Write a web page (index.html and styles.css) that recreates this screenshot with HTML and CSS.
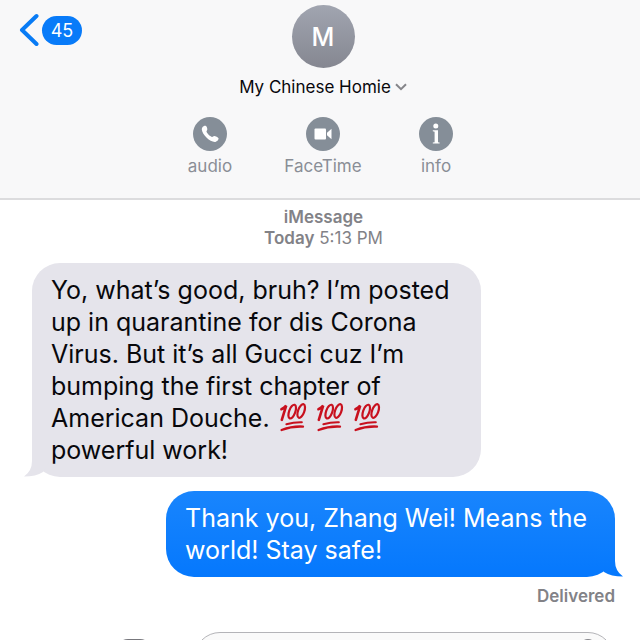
FILE: index.html
```html
<!DOCTYPE html>
<html lang="en">
<head>
<meta charset="utf-8">
<meta name="viewport" content="width=device-width, initial-scale=1">
<title>Messages</title>
<link rel="stylesheet" href="styles.css">
</head>
<body>
<svg class="sprite" aria-hidden="true">
  <linearGradient id="tail-fill" x1="0" y1="0" x2="0" y2="1">
    <stop offset="0" stop-color="#0c7dfd"/>
    <stop offset="1" stop-color="#0578fd"/>
  </linearGradient>
  <symbol id="hundred" viewBox="0 0 28 30">
    <g fill="none" stroke="#c8101e" stroke-linecap="round">
      <path stroke-width="2.600" d="M2.400 7.200Q5.500 6 7.200 3.600L2.800 17.800"/>
      <ellipse stroke-width="2.200" cx="13.200" cy="9.600" rx="3.100" ry="7.200" transform="rotate(20 13.200 9.600)"/>
      <ellipse stroke-width="2.200" cx="22.200" cy="9" rx="3.100" ry="7.200" transform="rotate(20 22.200 9)"/>
      <path stroke-width="2.100" d="M7.400 22.200Q15 20 22.800 20.200"/>
      <path stroke-width="2.300" d="M2.600 28Q13 24 24 24.600"/>
    </g>
  </symbol>
</svg>
<header class="header">
  <a class="back" href="#" aria-label="Back, 45 unread">
    <svg class="back-icon" viewBox="0 0 20 34" aria-hidden="true"><path d="M17.500 3 3 17l14.500 14"/></svg>
    <span class="badge">45</span>
  </a>
  <div class="contact">
    <div class="avatar">M</div>
    <button class="name" type="button">My Chinese Homie<svg class="chevron" viewBox="0 0 12 8" aria-hidden="true"><path d="m1 1.200 5 5 5-5"/></svg></button>
  </div>
  <nav class="actions">
    <button class="action" type="button">
      <svg class="action-icon" viewBox="0 0 34 34" aria-hidden="true"><circle cx="17" cy="17" r="17"/><path fill="#fff" d="M9.600 10.100c.8-1 2-1.700 3-1.300 1 .4 1.900 2.500 1.700 3.600-.2 1-.9 1.300-.8 2.100.3 1.700 3.600 4.900 5.400 5.400.9.2 1.300-.7 2.200-.8 1.200-.1 3.900 1.200 4.400 2.200.5 1.200-1.500 3.400-3.200 3.600-2.600.3-6-1.600-8.600-4.100-2.600-2.600-4.700-5.700-4.900-8.300-.1-.9.200-1.700.8-2.400z"/></svg>
      audio
    </button>
    <button class="action" type="button">
      <svg class="action-icon" viewBox="0 0 34 34" aria-hidden="true"><circle cx="17" cy="17" r="17"/><rect x="8.500" y="11.500" width="11.500" height="11" rx="1" fill="#fff"/><path fill="#fff" d="M21 15.800 25.500 11.700v10.600L21 18.300z"/></svg>
      FaceTime
    </button>
    <button class="action" type="button">
      <svg class="action-icon" viewBox="0 0 34 34" aria-hidden="true"><circle cx="17" cy="17" r="17"/><circle cx="16.800" cy="9" r="2.500" fill="#fff"/><path fill="#fff" d="M13.800 13.300h5.200v11.900l1.600.4v1h-6.800v-1l1.800-.4V14.700l-1.800-.4z"/></svg>
      info
    </button>
  </nav>
</header>
<main class="thread">
  <p class="stamp"><b>iMessage</b><br><b>Today</b> 5:13 PM</p>
  <div class="bubble received">Yo, what’s good, bruh? I’m posted up in quarantine for dis Corona Virus. But it’s all Gucci cuz I’m bumping the first chapter of American Douche. <svg class="emoji" role="img" aria-label="100"><use href="#hundred"/></svg> <svg class="emoji" role="img" aria-label="100"><use href="#hundred"/></svg> <svg class="emoji" role="img" aria-label="100"><use href="#hundred"/></svg> powerful work!
    <svg class="tail" viewBox="0 0 26 30" aria-hidden="true"><path d="M8 0V14Q8 24 0 29.500Q12 29.500 19 25L26 14V0z"/></svg>
  </div>
  <div class="bubble sent">Thank you, Zhang Wei! Means the world! Stay safe!
    <svg class="tail" viewBox="0 0 26 30" aria-hidden="true"><path d="M18 0V14Q18 24 26 29.500Q14 29.500 7 25L0 14V0z"/></svg>
  </div>
  <p class="status">Delivered</p>
</main>
<footer class="composer">
  <button class="camera" type="button" aria-label="Camera"></button>
  <div class="field">
    <input class="input" type="text" aria-label="Message">
    <button class="mic" type="button" aria-label="Record audio"></button>
  </div>
</footer>
</body>
</html>
```

FILE: styles.css
```css
* {
  box-sizing: border-box;
}

body {
  display: flex;
  flex-direction: column;
  height: 100vh;
  margin: 0;
  overflow: hidden;
  background: #fff;
  color: #08080c;
  font-family: Inter, "Liberation Sans", sans-serif;
}

button {
  padding: 0;
  border: 0;
  background: none;
  color: inherit;
  font: inherit;
}

p {
  margin: 0;
}

.sprite {
  position: absolute;
  width: 0;
  height: 0;
}

.header {
  position: relative;
  flex: none;
  padding: 5px 0 22px;
  border-bottom: 2px solid #dcdcde;
  background: #f8f8f9;
}

.back {
  position: absolute;
  top: 13px;
  left: 19px;
  display: flex;
  align-items: center;
  gap: 3px;
  text-decoration: none;
}

.back-icon {
  width: 20px;
  height: 34px;
  fill: none;
  stroke: #087bf5;
  stroke-width: 4;
  stroke-linecap: round;
  stroke-linejoin: round;
}

.badge {
  width: 40px;
  border-radius: 15px;
  background: #087bf9;
  color: #fff;
  font-size: 18px;
  line-height: 29px;
  text-align: center;
}

.contact {
  display: flex;
  flex-direction: column;
  align-items: center;
  gap: 8px;
  padding-left: 6px;
}

.avatar {
  width: 63px;
  height: 63px;
  border-radius: 50%;
  background: linear-gradient(#a1a5b0, #858791);
  color: #fff;
  font-size: 25px;
  font-weight: 500;
  line-height: 65px;
  text-align: center;
}

.name {
  display: flex;
  align-items: center;
  gap: 4px;
  font-size: 17px;
  line-height: 22px;
}

.chevron {
  width: 12px;
  height: 8px;
  fill: none;
  stroke: #85858a;
  stroke-width: 2;
}

.actions {
  display: flex;
  justify-content: center;
  margin-top: 19px;
  padding-left: 6px;
}

.action {
  display: flex;
  flex-direction: column;
  align-items: center;
  gap: 5px;
  width: 113px;
  color: #8a8e96;
  font-size: 17px;
  line-height: 20px;
}

.action-icon {
  width: 34px;
  height: 34px;
  fill: #858e98;
}

.thread {
  display: flex;
  flex: none;
  flex-direction: column;
  padding: 7px 25px 0 32px;
}

.stamp {
  color: #828287;
  font-size: 17px;
  line-height: 21px;
  text-align: center;
}

.stamp b,
.status {
  font-weight: 600;
}

.bubble {
  position: relative;
  width: 77%;
  padding: 11px 19px;
  border-radius: 28px;
  font-size: 25px;
  line-height: 32px;
}

.received {
  align-self: flex-start;
  margin-top: 14px;
  background: #e5e4eb;
}

.sent {
  align-self: flex-end;
  margin-top: 14px;
  background: linear-gradient(#1985fd, #0578fd);
  color: #fff;
}

.tail {
  position: absolute;
  bottom: 0;
  width: 26px;
  height: 30px;
}

.received .tail {
  left: -8px;
  fill: #e5e4eb;
}

.sent .tail {
  right: -8px;
  fill: url(#tail-fill);
}

.emoji {
  width: 28px;
  height: 30px;
  margin-left: 2px;
  vertical-align: -5px;
}

.status {
  margin-top: 9px;
  color: #828287;
  font-size: 17px;
  line-height: 20px;
  text-align: right;
}

.composer {
  display: flex;
  flex: none;
  gap: 42px;
  margin-top: 26px;
  padding: 0 26px 0 116px;
}

.camera {
  width: 36px;
  height: 28px;
  margin-top: 7px;
  border-radius: 12px;
  background: #77777c;
}

.field {
  display: flex;
  flex: 1;
  padding: 6px 12px;
  border: 1px solid #b4b4b8;
  border-radius: 26px;
  background: #fafafa;
}

.input {
  flex: 1;
  min-width: 0;
  height: 40px;
  border: 0;
  background: none;
  font: inherit;
}

.mic {
  width: 26px;
  height: 40px;
  border-radius: 50%;
  background: #85858a;
}
```
